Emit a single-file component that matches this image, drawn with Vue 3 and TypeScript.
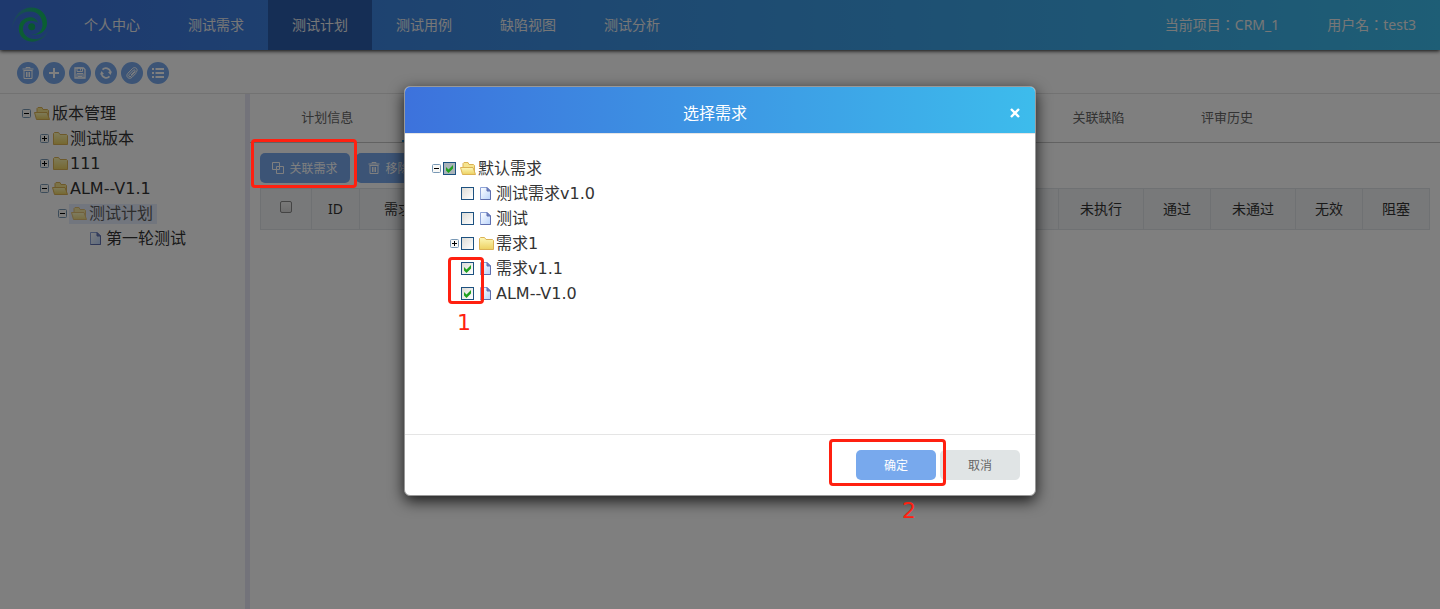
<script setup lang="ts">
import { ref } from 'vue'

type Icon = 'open' | 'closed' | 'doc'
interface TreeNode {
  label: string
  level: number
  icon: Icon
  expander?: 'plus' | 'minus'
  selected?: boolean
  checked?: boolean
  partial?: boolean
}

const navItems = ['个人中心', '测试需求', '测试计划', '测试用例', '缺陷视图', '测试分析']
const activeNav = ref('测试计划')

const tools = [
  { id: 'trash', label: '删除' },
  { id: 'plus', label: '新增' },
  { id: 'save', label: '保存' },
  { id: 'refresh', label: '刷新' },
  { id: 'clip', label: '附件' },
  { id: 'list', label: '列表' },
]

const planTree: TreeNode[] = [
  { label: '版本管理', level: 0, icon: 'open', expander: 'minus' },
  { label: '测试版本', level: 1, icon: 'closed', expander: 'plus' },
  { label: '111', level: 1, icon: 'closed', expander: 'plus' },
  { label: 'ALM--V1.1', level: 1, icon: 'open', expander: 'minus' },
  { label: '测试计划', level: 2, icon: 'open', expander: 'minus', selected: true },
  { label: '第一轮测试', level: 3, icon: 'doc' },
]

const requirementTree = ref<TreeNode[]>([
  { label: '默认需求', level: 0, icon: 'open', expander: 'minus', checked: true, partial: true },
  { label: '测试需求v1.0', level: 1, icon: 'doc', checked: false },
  { label: '测试', level: 1, icon: 'doc', checked: false },
  { label: '需求1', level: 1, icon: 'closed', expander: 'plus', checked: false },
  { label: '需求v1.1', level: 1, icon: 'doc', checked: true },
  { label: 'ALM--V1.0', level: 1, icon: 'doc', checked: true },
])

const tabs = [
  { label: '计划信息', cls: '' },
  { label: '测试需求', cls: '' },
  { label: '关联缺陷', cls: 'trailing' },
  { label: '评审历史', cls: '' },
]
const activeTab = ref('测试需求')
const columns = [
  { label: 'ID', cls: 'c-id' },
  { label: '需求名称', cls: 'c-name' },
  { label: '未执行', cls: 'c-three' },
  { label: '通过', cls: 'c-two' },
  { label: '未通过', cls: 'c-three' },
  { label: '无效', cls: 'c-two' },
  { label: '阻塞', cls: 'c-two' },
]
</script>

<template>
  <div class="page">
    <svg class="defs" width="0" height="0" aria-hidden="true">
      <defs>
        <linearGradient id="folderFill" x1="0" y1="0" x2="0" y2="1">
          <stop offset="0" stop-color="#fdf8b8" /><stop offset="1" stop-color="#ecd060" />
        </linearGradient>
        <linearGradient id="docFill" x1="0" y1="0" x2="1" y2="1">
          <stop offset="0" stop-color="#ffffff" /><stop offset="1" stop-color="#b9d3fb" />
        </linearGradient>
        <linearGradient id="logoOuter" x1="0" y1="0" x2="1" y2="0">
          <stop offset="0" stop-color="#3d84c8" /><stop offset=".55" stop-color="#20b080" /><stop offset="1" stop-color="#12c060" />
        </linearGradient>
        <linearGradient id="logoInner" x1="0" y1="0" x2="1" y2="0">
          <stop offset="0" stop-color="#16bd62" /><stop offset=".55" stop-color="#20ac78" /><stop offset="1" stop-color="#3d84c8" />
        </linearGradient>
        <symbol id="i-open" viewBox="0 0 16 16">
          <path d="M3 7V2.500L4 1.500H8L9 3.500H13.500L14.500 4.500V12" fill="#f6e48e" stroke="#dbb255" />
          <path d="M.5 6.500H13L15.500 13.500H2.500Z" fill="url(#folderFill)" stroke="#dbb255" stroke-linejoin="round" />
        </symbol>
        <symbol id="i-closed" viewBox="0 0 16 16">
          <path d="M1.500 2.500L2.500 1.500H6.500L8 3.500H14.500L15.500 4.500V13.500H1.500Z" fill="url(#folderFill)" stroke="#dbb255" stroke-linejoin="round" />
        </symbol>
        <symbol id="i-doc" viewBox="0 0 16 16">
          <path d="M2.500 1.500H9L12.500 5V13.500H2.500Z" fill="url(#docFill)" stroke="#8da2d6" />
          <path d="M12.500 5V13.500H2.500" fill="none" stroke="#5f6fae" />
          <path d="M9 1.500V5H12.500Z" fill="#7186c8" stroke="#5f6fae" />
        </symbol>
        <symbol id="i-plus-box" viewBox="0 0 9 9">
          <rect x=".5" y=".5" width="8" height="8" rx="1" fill="#f8f8f6" stroke="#7898b5" />
          <path d="M2 4.500H7M4.500 2V7" stroke="#000" />
        </symbol>
        <symbol id="i-minus-box" viewBox="0 0 9 9">
          <rect x=".5" y=".5" width="8" height="8" rx="1" fill="#f8f8f6" stroke="#7898b5" />
          <path d="M2 4.500H7" stroke="#000" />
        </symbol>
        <symbol id="i-trash" viewBox="0 0 12 12">
          <path d="M4 1.500V.5H8V1.500M.5 2H11.500M1.500 3.500H10.500M2 3.500V11.500H10V3.500M4.500 5V10M6 5V10M7.500 5V10" fill="none" stroke="currentColor" />
        </symbol>
        <symbol id="i-plus" viewBox="0 0 12 12">
          <path d="M1 6H11M6 1V11" stroke="currentColor" stroke-width="2" />
        </symbol>
        <symbol id="i-save" viewBox="0 0 12 12">
          <path d="M1 1H9.500L11 2.500V11H1Z" fill="none" stroke="currentColor" stroke-width="1.300" />
          <path d="M3 1H8.500V4.500H3ZM6.500 1.500V3.500M3 11V6.500H9V11M4 8H8M4 9.500H8" fill="none" stroke="currentColor" />
        </symbol>
        <symbol id="i-refresh" viewBox="0 0 12 12">
          <path d="M1.500 7A4.700 4.700 0 0 0 9.500 9.300M10.500 5A4.700 4.700 0 0 0 2.500 2.700" fill="none" stroke="currentColor" stroke-width="1.700" />
          <path d="M0 7.500L1.500 4L4 7ZM12 4.500L10.500 8L8 5Z" fill="currentColor" />
        </symbol>
        <symbol id="i-clip" viewBox="0 0 12 12">
          <path d="M9.500 4.500L5 9.300C3.500 10.500 2 9 3.200 7.500L7.500 3C8.500 2.200 9.500 3.200 8.700 4.200L5 8M10 6.200L6 10.300C3 13-.8 9.500 1.700 6.500L6.500 1.500C9-.8 12.500 2 10.500 4.800L9.800 5.800" fill="none" stroke="currentColor" stroke-width="1" />
        </symbol>
        <symbol id="i-list" viewBox="0 0 12 12">
          <path d="M0 2H2M0 6H2M0 10H2M3.500 2H12M3.500 6H12M3.500 10H12" stroke="currentColor" stroke-width="2" />
        </symbol>
        <symbol id="i-link" viewBox="0 0 12 12">
          <path d="M.5 .5H7.500V7.500H.5ZM4.500 4.500H11.500V11.500H4.500Z" fill="none" stroke="currentColor" />
        </symbol>
      </defs>
    </svg>

    <header class="topbar">
      <a class="logo" href="#" aria-label="首页">
        <svg viewBox="0 0 38 38" width="38" height="38" aria-hidden="true">
          <path d="M1 23C2 9 11 1.500 20 1.500C30 1.500 36 9 36 17C36 25 29 30 20 28.500C27 29 32 24 31.500 18C31 10 26 5.500 19 5.500C10 5.500 3 12 1 23Z" fill="url(#logoOuter)" />
          <path d="M27 17C26 12 21 10.500 17 11.500C10 13 7 19 8 25C9.500 33 17 36.500 24 35.500C31 34 36 30 36.500 25C33 31 28 33.500 23 33C16 32.500 11.500 28 12 22C12.500 16 19 12 27 17Z" fill="url(#logoInner)" />
          <circle cx="20.700" cy="20.700" r="3.500" fill="#12ad60" />
        </svg>
      </a>
      <nav class="nav">
        <a v-for="item in navItems" :key="item" href="#" :class="{ active: item === activeNav }" @click.prevent="activeNav = item">{{ item }}</a>
      </nav>
      <div class="user">
        <span>当前项目：CRM_1</span>
        <span>用户名：test3</span>
      </div>
    </header>

    <div class="toolbar">
      <button v-for="tool in tools" :key="tool.id" type="button" :aria-label="tool.label">
        <svg width="12" height="12" aria-hidden="true"><use :href="'#i-' + tool.id" /></svg>
      </button>
    </div>

    <div class="main">
      <aside class="sidebar">
        <ul class="tree">
          <li v-for="node in planTree" :key="node.label" :class="'level-' + node.level">
            <span class="switch"><svg v-if="node.expander" width="9" height="9" aria-hidden="true"><use :href="'#i-' + node.expander + '-box'" /></svg></span>
            <a href="#" :class="{ selected: node.selected }" @click.prevent>
              <svg width="16" height="16" aria-hidden="true"><use :href="'#i-' + node.icon" /></svg><span>{{ node.label }}</span>
            </a>
          </li>
        </ul>
      </aside>

      <section class="content">
        <nav class="tabs">
          <button v-for="tab in tabs" :key="tab.label" type="button" :class="[tab.cls, { active: tab.label === activeTab }]" @click="activeTab = tab.label">{{ tab.label }}</button>
        </nav>
        <div class="actions">
          <button type="button"><svg width="12" height="12" aria-hidden="true"><use href="#i-link" /></svg>关联需求</button>
          <button type="button"><svg width="12" height="12" aria-hidden="true"><use href="#i-trash" /></svg>移除需求</button>
        </div>
        <table class="grid">
          <thead>
            <tr>
              <th class="c-check"><input type="checkbox" aria-label="全选" /></th>
              <th v-for="col in columns" :key="col.label" :class="col.cls">{{ col.label }}</th>
            </tr>
          </thead>
        </table>
      </section>
    </div>

    <div class="backdrop">
      <div class="dialog" role="dialog" aria-modal="true" aria-labelledby="dialog-title">
        <div class="dialog-head">
          <h2 id="dialog-title">选择需求</h2>
          <button type="button" class="close" aria-label="关闭">
            <svg width="10" height="10" viewBox="0 0 10 10" aria-hidden="true"><path d="M1 1L9 9M9 1L1 9" stroke="#fff" stroke-width="2.400" /></svg>
          </button>
        </div>
        <div class="dialog-body">
          <ul class="tree checks">
            <li v-for="node in requirementTree" :key="node.label" :class="'level-' + node.level">
              <span class="switch"><svg v-if="node.expander" width="9" height="9" aria-hidden="true"><use :href="'#i-' + node.expander + '-box'" /></svg></span>
              <label>
                <span class="box" :class="{ partial: node.partial }">
                  <input v-model="node.checked" type="checkbox" />
                  <svg v-if="node.checked" width="13" height="13" viewBox="0 0 13 13" aria-hidden="true"><path d="M3 5L5.500 7.500L10 3V6.500L5.500 11L3 8.500Z" fill="#21a121" /></svg>
                </span>
                <svg width="16" height="16" aria-hidden="true"><use :href="'#i-' + node.icon" /></svg><span>{{ node.label }}</span>
              </label>
            </li>
          </ul>
        </div>
        <div class="dialog-foot">
          <button type="button" class="ok">确定</button>
          <button type="button" class="cancel">取消</button>
        </div>
        <div class="mark mark-checks"></div>
        <span class="step step-one">1</span>
        <div class="mark mark-ok"></div>
        <span class="step step-two">2</span>
      </div>
    </div>
    <div class="mark mark-link"></div>
  </div>
</template>

<style>
body {
  margin: 0;
}
</style>

<style scoped>
.page {
  position: relative;
  display: flex;
  flex-direction: column;
  min-height: 100vh;
  background: #fff;
  color: #333;
  font-family: "Noto Sans", "Noto Sans CJK SC", sans-serif;
  font-size: 14px;
}
.page *,
.page {
  box-sizing: border-box;
}
.defs {
  position: absolute;
}
button {
  font-family: inherit;
  border: 0;
  padding: 0;
  cursor: pointer;
}
a {
  color: inherit;
  text-decoration: none;
}
.topbar {
  position: relative;
  display: flex;
  height: 50px;
  background: linear-gradient(to right, #3d72dc, #3dbcec);
  box-shadow: 0 1px 4px rgba(0, 0, 0, 0.9);
  color: #eee;
  line-height: 50px;
}
.logo {
  display: flex;
  align-items: center;
  width: 60px;
  padding-left: 11px;
}
.nav {
  display: flex;
}
.nav a {
  width: 104px;
  text-align: center;
}
.nav a.active {
  background: #2a5caa;
}
.user {
  display: flex;
  gap: 48px;
  margin-left: auto;
  padding-right: 24px;
  font-family: "Noto Sans", "Noto Sans CJK TC", sans-serif;
}
.toolbar {
  display: flex;
  align-items: center;
  gap: 4px;
  height: 44px;
  padding: 2px 17px 0;
  border-bottom: 1px solid #e5e5e5;
}
.toolbar button {
  display: flex;
  align-items: center;
  justify-content: center;
  width: 22px;
  height: 22px;
  border-radius: 50%;
  background: #78a9ed;
  color: #fff;
}
.main {
  display: flex;
  flex: 1;
}
.sidebar {
  width: 250px;
  flex: none;
  padding: 7px 0 0 18px;
  border-right: 5px solid #e7e7f5;
}
.tree {
  margin: 0;
  padding: 0;
  list-style: none;
  font-family: "DejaVu Sans", "Noto Sans CJK SC", sans-serif;
  font-size: 16px;
  line-height: 20px;
}
.tree li {
  display: flex;
  align-items: center;
  height: 25px;
}
.level-1 {
  padding-left: 18px;
}
.level-2 {
  padding-left: 36px;
}
.level-3 {
  padding-left: 54px;
}
.switch {
  display: flex;
  width: 16px;
  padding-left: 4px;
}
.tree a,
.tree label {
  display: flex;
  align-items: center;
  gap: 2px;
  height: 20px;
}
.tree a.selected {
  margin-left: -1px;
  padding: 0 4px 0 2px;
  background: #dfe9fd;
  opacity: 0.8;
}
.checks .switch {
  width: 15px;
}
.box {
  display: grid;
  margin-right: 2px;
}
.box input,
.box svg {
  grid-area: 1 / 1;
}
.box input {
  appearance: none;
  width: 13px;
  height: 13px;
  margin: 0;
  border: 1px solid #1c5180;
  background: linear-gradient(135deg, #dcdcd7, #fff);
}
.box.partial input {
  background: #a9b3b9;
}
.box svg {
  pointer-events: none;
}
.content {
  flex: 1;
  min-width: 0;
}
.tabs {
  display: grid;
  grid-template-columns: repeat(8, 1fr);
  height: 49px;
  padding: 0 12.5% 0 13px;
  border-bottom: 1px solid #c5c5c5;
}
.tabs button {
  margin: 0 10px;
  padding-bottom: 2px;
  border-bottom: 2px solid transparent;
  background: none;
  color: #666;
  font-size: 13px;
}
.tabs .trailing {
  grid-column: 7;
}
.tabs button.active {
  border-color: #2a9be0;
  color: #2a9be0;
}
.actions {
  display: flex;
  gap: 6px;
  padding: 10px 10px 5px;
}
.actions button {
  display: flex;
  align-items: center;
  justify-content: center;
  gap: 5px;
  width: 90px;
  height: 30px;
  border-radius: 5px;
  background: #78a9ed;
  color: #fff;
  font-size: 12px;
}
.grid {
  width: calc(100% - 20px);
  margin: 0 10px;
  border-collapse: collapse;
  table-layout: fixed;
}
.grid th {
  height: 41px;
  padding: 0 0 2px;
  border: 1px solid #dfe3e7;
  background: #f0f3f5;
  font-weight: 400;
}
.grid .c-check {
  width: 51px;
  line-height: 16px;
}
.c-id {
  width: 48px;
}
.grid .c-name {
  padding-left: 24px;
  text-align: left;
}
.c-three {
  width: 85px;
}
.c-two {
  width: 67px;
}
.grid input {
  appearance: none;
  width: 12px;
  height: 12px;
  margin: 0;
  border: 1px solid #888;
  border-radius: 2px;
  background: linear-gradient(#f2f2f2, #dcdcdc);
}
.backdrop {
  position: absolute;
  inset: 0;
  padding-top: 86px;
  background: rgba(0, 0, 0, 0.5);
}
.dialog {
  position: relative;
  width: 632px;
  margin: 0 auto;
  border: 1px solid #999;
  border-radius: 6px;
  background: #fff;
  box-shadow: 0 5px 15px rgba(0, 0, 0, 0.8);
}
.dialog-head {
  display: flex;
  align-items: center;
  height: 47px;
  padding: 5px 15px 0;
  border-bottom: 1px solid #e5e5e5;
  border-radius: 5px 5px 0 0;
  background: linear-gradient(to right, #3d72dc, #3dbcec);
  color: #fff;
}
.dialog-head h2 {
  flex: 1;
  margin: 0;
  font-size: 16px;
  font-weight: 400;
  line-height: 24px;
  text-align: center;
}
.close {
  display: flex;
  padding: 4px 0;
  background: none;
}
.dialog-body {
  height: 300px;
  padding: 22px 23px;
}
.dialog-foot {
  display: flex;
  justify-content: flex-end;
  gap: 4px;
  padding: 15px;
  border-top: 1px solid #e5e5e5;
}
.dialog-foot button {
  width: 80px;
  height: 30px;
  border-radius: 5px;
  font-size: 12px;
}
.dialog-foot .ok {
  background: #78a9ed;
  color: #fff;
}
.dialog-foot .cancel {
  background: #e0e4e5;
  color: #666;
}
.mark {
  position: absolute;
  border: 3px solid #ff2010;
  border-radius: 4px;
  pointer-events: none;
}
.mark-link {
  top: 139px;
  left: 251px;
  width: 106px;
  height: 49px;
}
.mark-checks {
  top: 170px;
  left: 43px;
  width: 36px;
  height: 47px;
}
.mark-ok {
  top: 352px;
  right: 89px;
  width: 117px;
  height: 47px;
}
.step {
  position: absolute;
  color: #ff2010;
  font-family: "DejaVu Sans", sans-serif;
  font-size: 22px;
  line-height: 26px;
}
.step-one {
  top: 223px;
  left: 52px;
}
.step-two {
  top: 411px;
  right: 119px;
}
</style>
